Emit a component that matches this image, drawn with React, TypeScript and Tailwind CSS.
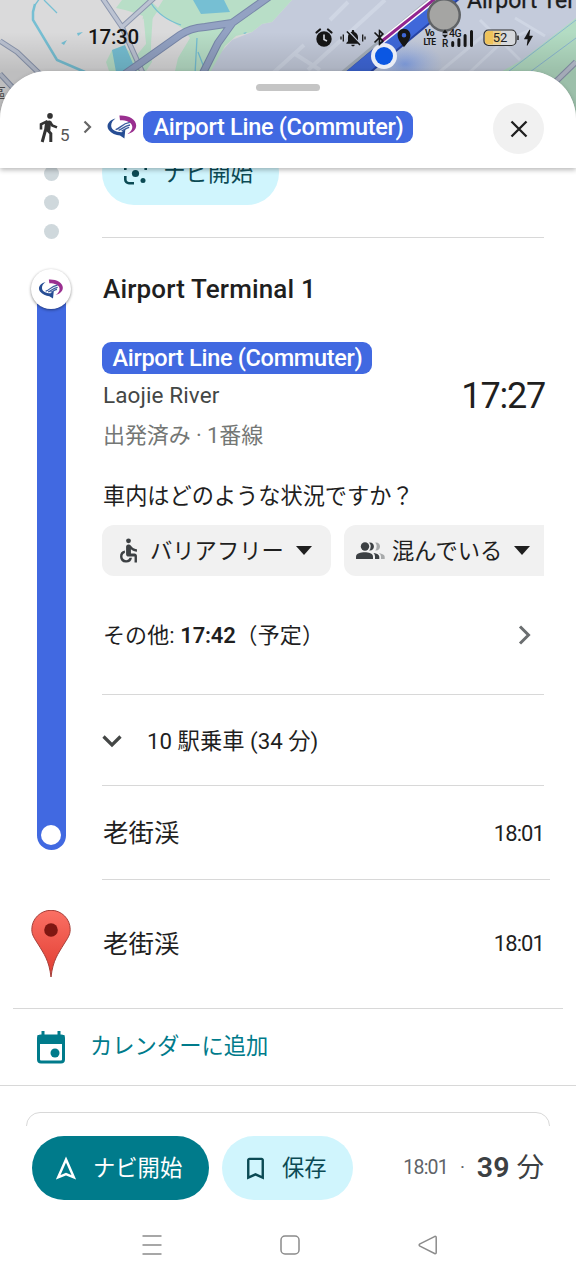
import type { ReactNode } from "react";
import clsx from "clsx";
import { MdAccessible, MdBluetooth, MdBolt, MdBookmarkBorder, MdLocationOn, MdNotificationsOff } from "react-icons/md";

function MapBackdrop() {
  return (
    <svg className="absolute left-0 top-0" width="576" height="128" viewBox="0 0 576 128">
      <defs>
        <linearGradient id="sheetShade" x1="0" y1="0" x2="0" y2="1">
          <stop offset="0.25" stopColor="#000" stopOpacity="0" />
          <stop offset="0.56" stopColor="#000" stopOpacity="0.13" />
          <stop offset="1" stopColor="#000" stopOpacity="0.13" />
        </linearGradient>
        <radialGradient id="heading">
          <stop offset="0" stopColor="#5f8df5" stopOpacity="0.6" />
          <stop offset="1" stopColor="#8fb0f5" stopOpacity="0" />
        </radialGradient>
      </defs>
      <rect width="576" height="128" fill="#dadadb" />
      <path d="M200 80 L214 60 L232 40 L252 32 L262 24 L272 22 L292 0 H576 V128 H200Z" fill="#c4cbdb" />
      <path d="M122 0 H292 L272 22 L262 24 L252 32 L236 36 L225 46 L206 80 H173 L178 58 L190 38 L182 28 L166 18 L157 12 L150 22 L152 62 L140 80 H112 L106 62 L112 50 L122 46 L140 36 L143 16 L135 13 L125 10 L116 8Z" fill="#b8dec7" />
      <path d="M158 12 L172 24 L186 32 L182 42 L152 60 L151 48Z M150 0 L163 0 L158 8Z M122 46 L140 36 L141 20 L145 18 L146 44 L136 56Z" fill="#dadadb" />
      <path d="M143 12 L153 12 L151 44 L147 52Z" fill="#b8dec7" />
      <path d="M193 0 H224 L230 12 L201 14Z M112 50 L125 45 L134 66 L124 72 H116Z" fill="#76bfd3" />
      <path d="M61 43 L67 40 L64 45Z M77 33 L83 32 L78 36Z M243 33 L247 32 L245 34Z" fill="#76bfd3" />
      <path d="M35 4 L33 12 L33 20 L57 60 L85 72" fill="none" stroke="#76bfd3" strokeWidth="2.5" />
      <path d="M40 -2 L35 5 M44 0 L57 13 M151 3 Q160 18 181 25 M197 38 L195 74 M198 52 L205 70" fill="none" stroke="#76bfd3" strokeWidth="1.3" />
      <g fill="none" strokeLinejoin="round">
        <path d="M0 41 L17 52 L42 76 M0 74 L14 89 M101 -4 L122 27 L145 78 M122 27 L154 -2" stroke="#8b96ae" strokeWidth="5.5" />
        <path d="M0 41 L17 52 L42 76 M0 74 L14 89 M101 -4 L122 27 L145 78 M122 27 L154 -2" stroke="#bcc3d2" strokeWidth="3.5" />
        <path d="M125 74 L180 35 Q190 28 205 27 L232 23 L270 -4 M233 22 L218 43 L201 77" stroke="#7887a9" strokeWidth="8" />
        <path d="M125 74 L180 35 Q190 28 205 27 L232 23 L270 -4 M233 22 L218 43 L201 77" stroke="#93a2c3" strokeWidth="6" />
      </g>
      <g fill="none" stroke="#cfd6e4" strokeWidth="4">
        <path d="M272 74 L304 45 M308 70 L350 32 L385 0 M295 54 L320 70 M348 2 L330 20" />
        <path d="M430 80 L490 30 M470 72 L500 44 L530 30 M480 20 L520 60 M515 18 L545 36" strokeWidth="3" />
      </g>
      <path d="M576 18 L522 60 L490 78 V128 H576Z" fill="#b3dcc3" />
      <path d="M500 78 L576 20 M530 72 L576 38" stroke="#8bb6d2" fill="none" />
      <path d="M545 92 L576 62" stroke="#8b96ae" strokeWidth="6" />
      <path d="M545 92 L576 62" stroke="#bcc3d2" strokeWidth="4" />
      <ellipse cx="405" cy="64" rx="38" ry="24" fill="url(#heading)" />
      <path d="M350 78 L454 -8" stroke="#2744a5" strokeWidth="19" />
      <path d="M350 78 L454 -8" stroke="#3f68da" strokeWidth="15" />
      <path d="M338 76 L434 -4" stroke="#a7b1bc" strokeWidth="3" />
      <path d="M382 41 L436 -2" stroke="#fff" strokeWidth="6" />
      <path d="M382 41 L436 -2" stroke="#92258f" strokeWidth="3" />
      <circle cx="444" cy="15" r="17" fill="#606366" />
      <circle cx="444" cy="15" r="14.5" fill="#a5a5a3" />
      <rect y="0" width="576" height="128" fill="url(#sheetShade)" />
      <circle cx="384" cy="56" r="13" fill="#e9ecf5" />
      <circle cx="384" cy="56" r="9" fill="#0b57e3" />
      <text x="467" y="7.5" fontSize="24" fontFamily="Roboto, sans-serif" fill="#1c1d20" stroke="#1c1d20" strokeWidth="0.3" textLength="108" lengthAdjust="spacingAndGlyphs">Airport Ter</text>
      <text x="-8" y="98" fontSize="14" fontFamily="Noto Sans CJK JP, sans-serif" fill="#4b4b4b">區</text>
    </svg>
  );
}

function StatusBar() {
  return (
    <div className="relative flex h-[71px] shrink-0 items-center pt-[4px] pl-[88px] text-[#161616]">
      <span className="w-[227px] text-[20.5px] font-medium tracking-[-0.2px]">17:30</span>
      <svg width="18" height="20" viewBox="0 0 18 20">
        <circle cx="9" cy="11" r="7.7" fill="currentColor" />
        <path d="M1.5 4.5 L5 1.5 M16.5 4.5 L13 1.5" stroke="currentColor" strokeWidth="2.2" strokeLinecap="round" />
        <path d="M9 6.5 V11.5 L12 13" stroke="#d5d8df" strokeWidth="1.6" fill="none" />
      </svg>
      <div className="ml-[7px] flex w-[26px] items-center justify-between">
        <svg width="4" height="10" viewBox="0 0 4 10"><path d="M1 3.5 V6.5 M3.3 1.5 V8.5" stroke="currentColor" strokeWidth="1.3" /></svg>
        <MdNotificationsOff className="-mx-1 size-[20px] shrink-0" />
        <svg width="4" height="10" viewBox="0 0 4 10"><path d="M3 3.5 V6.5 M.7 1.5 V8.5" stroke="currentColor" strokeWidth="1.3" /></svg>
      </div>
      <MdBluetooth className="ml-[4px] size-[19px]" />
      <MdLocationOn className="ml-[4px] size-[22px]" />
      <div className="ml-[8px] flex w-[13px] flex-col items-center text-[8.5px] leading-[9px] font-bold tracking-[-0.5px]">
        <span>Vo</span>
        <span>LTE</span>
      </div>
      <svg className="ml-[6px]" width="34" height="20" viewBox="0 0 34 20">
        <path d="M0 5.2 L3 1.5 L6 5.2Z M0 6.8 L3 10 L6 6.8Z" fill="currentColor" />
        <text x="7" y="9" fontSize="10.5" fontWeight="500" fill="currentColor" fontFamily="Roboto, sans-serif" letterSpacing="-0.4">4G</text>
        <text x="0" y="19" fontSize="10" fontWeight="500" fill="currentColor" fontFamily="Roboto, sans-serif">R</text>
        <path d="M10.7 17.5 V14.5 M16.9 17.5 V11.5 M23.1 17.5 V7.5 M29.5 17.5 V3.5" stroke="currentColor" strokeWidth="3" strokeLinecap="round" />
      </svg>
      <svg className="ml-[7px]" width="36" height="18" viewBox="0 0 36 18">
        <rect x="1" y="1" width="32" height="15.5" rx="4.5" fill="#d6d8dc" />
        <path d="M5.5 2 H10 V15.5 H5.5 A3.5 3.5 0 0 1 2 12 V5.5 A3.5 3.5 0 0 1 5.5 2Z" fill="#efc35b" />
        <path d="M10 2 H18 V15.5 H10Z" fill="#ecd08d" />
        <rect x="1" y="1" width="32" height="15.5" rx="4.5" fill="none" stroke="#2d2d2d" strokeWidth="1.2" />
        <path d="M35 6.5 V11" stroke="#2d2d2d" strokeWidth="1.6" />
        <text x="17" y="13.2" textAnchor="middle" fontSize="13" fill="#222" fontFamily="Roboto, sans-serif">52</text>
      </svg>
      <MdBolt className="-ml-px size-[21px]" />
    </div>
  );
}

function WalkIcon({ className }: { className?: string }) {
  return (
    <svg className={className} width="19" height="30" viewBox="0 0 19 30" fill="none" stroke="#333">
      <circle cx="11" cy="2.9" r="2.8" fill="#333" stroke="none" />
      <path d="M6.2 8 L11 7.4 L12 10 L11.2 18.2 L5 18.2Z" fill="#333" stroke="none" />
      <path d="M8.5 8.2 L2 11.3 V16.5" strokeWidth="2.6" />
      <path d="M10.8 8.5 L13.2 12.5 L18 14.4" strokeWidth="2.6" />
      <path d="M6.5 17 L3.2 29" strokeWidth="3" />
      <path d="M8 16.5 L11.8 20.5 V29" strokeWidth="3" />
    </svg>
  );
}

function MetroLogo({ className }: { className?: string }) {
  return (
    <svg className={className} viewBox="0 0 30 24">
      <path d="M8.5 3.6 C2 5.2 -1.5 10.5 1.8 15 C4.2 18.3 9 20.2 13 20.6 L17.4 23.4 L18.4 14 L14.6 17.2 C9 17 4.6 15 4.2 11 C4 8 5.8 5.4 8.5 3.6Z" fill="#264d94" />
      <path d="M12.4 .6 C21 0 29.2 4.2 29.2 10.6 C29.2 15 25.6 18 20.4 19.2 C23.6 17 25.8 14.4 25.2 11 C24.4 7.2 19.5 5.2 13 5.2Z" fill="#9a2f90" />
      <path d="M8.6 14.6 C13 13.8 15 8.4 22.8 7.4 M11.6 15.4 C15 14.4 17 11 23 10 M14.6 15.8 C17.4 15 18.6 13.2 22.2 12.4" fill="none" stroke="#3b5c9e" strokeWidth="1.4" />
    </svg>
  );
}

function LineBadge({ className }: { className?: string }) {
  return (
    <span className={clsx("flex h-8 items-center justify-center rounded-[9px] bg-[#4169e1] pt-px pl-px text-[23.5px] font-medium tracking-[-0.3px] whitespace-nowrap text-white", className)}>
      Airport Line (Commuter)
    </span>
  );
}

function SheetHeader() {
  return (
    <header className="relative z-10 h-[97px] shrink-0 rounded-t-[48px] bg-white shadow-[0_2px_5px_rgba(0,0,0,0.28)]">
      <div className="mx-auto h-[7px] w-16 translate-y-[13px] rounded-full bg-[#c5c5c5]" />
      <div className="flex items-center pt-[25px] pl-[39px]">
        <WalkIcon className="-mt-px mr-[2px]" />
        <span className="mt-[12px] w-[20px] text-[17px] leading-5 text-[#555]">5</span>
        <svg className="mt-[-4px] mr-[15px] ml-[3px]" width="9" height="14" viewBox="0 0 9 14">
          <path d="M1.5 1.5 L7 7 L1.5 12.5" fill="none" stroke="#666" strokeWidth="2.2" />
        </svg>
        <MetroLogo className="-mt-[3px] h-6 w-[30px]" />
        <LineBadge className="-mt-[3px] ml-[6px] w-[270px]" />
        <button className="ml-20 flex size-[51px] items-center justify-center rounded-full bg-[#f1f1f1]">
          <svg width="18" height="18" viewBox="0 0 18 18">
            <path d="M1.5 1.5 L16.5 16.5 M16.5 1.5 L1.5 16.5" stroke="#1f1f1f" strokeWidth="2.3" />
          </svg>
        </button>
      </div>
    </header>
  );
}

function LensIcon() {
  return (
    <svg width="23" height="23" viewBox="0 0 23 23" fill="none" stroke="#0b4a54" strokeWidth="2.6">
      <path d="M1.3 8 V5 A3.7 3.7 0 0 1 5 1.3 H8 M15 1.3 H18 A3.7 3.7 0 0 1 21.7 5 V8 M1.3 14 V17.5 A3.7 3.7 0 0 0 5 21.2 H10" />
      <circle cx="11.5" cy="11.5" r="3.6" fill="#0b4a54" stroke="none" />
      <circle cx="19" cy="18.5" r="2.5" fill="#0b4a54" stroke="none" />
    </svg>
  );
}

function WalkSection() {
  return (
    <div className="flex h-[70px] shrink-0">
      <div className="flex w-[102px] flex-col items-center gap-[14px]">
        <span className="-mt-[2px] size-[15px] shrink-0 rounded-full bg-[#cfd8dc]" />
        <span className="size-[15px] shrink-0 rounded-full bg-[#cfd8dc]" />
        <span className="size-[15px] shrink-0 rounded-full bg-[#cfd8dc]" />
      </div>
      <div className="w-[442px] border-b-[1.5px] border-[#d8d8d8]">
        <button className="-mt-[27px] flex h-16 w-[177px] items-center rounded-full bg-[#d0f5fd] pl-[22px] text-[22.5px] text-[#0b4a54]">
          <LensIcon />
          <span className="ml-[16px] pt-px">ナビ開始</span>
        </button>
      </div>
    </div>
  );
}

function Caret() {
  return (
    <svg width="16" height="9" viewBox="0 0 16 9">
      <path d="M0 0 H16 L8 9Z" fill="#1f1f1f" />
    </svg>
  );
}

function CrowdIcon() {
  return (
    <svg width="29" height="18" viewBox="0 0 29 18" fill="#3c4043">
      <circle cx="9" cy="4.5" r="4.2" />
      <path d="M0 17 V14.5 C0 11.5 5 10.3 8.7 10.3 C12.5 10.3 17 11.5 17 14.5 V17Z" />
      <path d="M13.2 .5 C19.5 -.2 19.5 9.2 13.2 8.5 Q16.2 4.5 13.2 .5Z M17.5 10.9 C21 11.5 23.3 12.6 23.3 14.8 V17 H19 V14.5 Q19 12.3 17.5 10.9Z" />
      <path d="M19.3 .5 C25.6 -.2 25.6 9.2 19.3 8.5 Q22 4.5 19.3 .5Z M22.8 10.9 C26.5 11.7 28.7 12.7 28.7 14.8 V17 H25 V14.5 Q25 12.3 22.8 10.9Z" opacity="0.4" />
    </svg>
  );
}

function Chip({ icon, label, className }: { icon: ReactNode; label: string; className?: string }) {
  return (
    <button className={clsx("flex h-[51px] shrink-0 items-center bg-[#f1f1f1] text-[22.3px] text-[#1f1f1f]", className)}>
      {icon}
      <span className="mr-3 pt-[2px] whitespace-nowrap">{label}</span>
      <Caret />
    </button>
  );
}

function TransitSection() {
  return (
    <div className="flex h-[642px] shrink-0">
      <div className="flex w-[102px] flex-col items-center pt-[31px]">
        <div className="z-[1] flex size-10 shrink-0 items-center justify-center rounded-full bg-white shadow-[0_1px_3px_rgba(0,0,0,0.45)]">
          <MetroLogo className="h-5 w-[26px]" />
        </div>
        <div className="-mt-5 flex h-[561px] w-[29px] items-end justify-center rounded-b-full bg-[#4169e1] pb-[5px]">
          <span className="size-[20px] rounded-full bg-white" />
        </div>
      </div>
      <div className="w-[448px] border-b-[1.5px] border-[#d8d8d8] pr-[6px]">
        <h2 className="h-[104px] pt-[32px] pl-px text-[26px] leading-[38px] font-medium tracking-[0.15px] text-[#1f1f1f]">Airport Terminal 1</h2>
        <div className="flex h-[133px] justify-between">
          <div>
            <LineBadge className="w-[270px]" />
            <p className="mt-[4px] pl-px text-[22.5px] leading-[34px] tracking-[0.1px] text-[#444746]">Laojie River</p>
            <p className="mt-[7px] pl-px text-[22px] leading-[34px] tracking-[-0.1px] text-[#747775]">出発済み · 1番線</p>
          </div>
          <span className="-mr-px pt-[34px] text-[36px] leading-10 tracking-[-1.2px] text-[#1f1f1f]">17:27</span>
        </div>
        <p className="h-[50px] pt-px pl-px text-[22.2px] leading-10 text-[#1f1f1f]">車内はどのような状況ですか？</p>
        <div className="flex gap-[13px] overflow-hidden">
          <Chip className="w-[229px] rounded-[12px] pl-[12px]" icon={<MdAccessible className="mr-[7px] size-[29px] text-[#3c4043]" />} label="バリアフリー" />
          <Chip className="w-[212px] rounded-[12px] pl-[12px]" icon={<span className="mr-[7px]"><CrowdIcon /></span>} label="混んでいる" />
        </div>
        <div className="flex h-[119px] items-center justify-between border-b-[1.5px] border-[#d8d8d8] pr-[13px] pl-px text-[22px] text-[#1f1f1f]">
          <p className="tracking-[0.1px]">その他: <b className="font-semibold tracking-[-0.2px]">17:42</b>（予定）</p>
          <svg width="13" height="20" viewBox="0 0 13 20">
            <path d="M2 1.5 L10.5 10 L2 18.5" fill="none" stroke="#6b6e70" strokeWidth="3" />
          </svg>
        </div>
        <div className="flex h-[91px] items-center border-b-[1.5px] border-[#d8d8d8] pt-[3px] text-[22.3px] text-[#1f1f1f]">
          <svg className="mr-[25px]" width="20" height="13" viewBox="0 0 20 13">
            <path d="M1.5 1.5 L10 10 L18.5 1.5" fill="none" stroke="#444746" strokeWidth="3.2" />
          </svg>
          10 駅乗車 (34 分)
        </div>
        <div className="flex h-[93px] items-center justify-between pt-[2px] pl-px text-[#1f1f1f]">
          <span className="text-[25.5px]">老街渓</span>
          <span className="text-[22px] tracking-[-0.9px]">18:01</span>
        </div>
      </div>
    </div>
  );
}

function DestinationSection() {
  return (
    <div className="flex h-[128px] shrink-0 items-center pr-8 text-[#1f1f1f]">
      <div className="flex w-[102px] justify-center">
        <svg width="40" height="68" viewBox="0 0 40 68">
          <defs>
            <linearGradient id="pin" x1="0" y1="0" x2="0" y2="1">
              <stop offset="0" stopColor="#fb7064" />
              <stop offset="1" stopColor="#e03c31" />
            </linearGradient>
          </defs>
          <path d="M20 67 C18 50 13 44 7 34 C3.5 28.5 .8 25 .8 19.5 A19.2 19.2 0 0 1 39.2 19.5 C39.2 25 36.5 28.5 33 34 C27 44 22 50 20 67Z" fill="url(#pin)" stroke="#a63f39" />
          <circle cx="20" cy="20" r="6.8" fill="#7f1712" />
        </svg>
      </div>
      <span className="flex-1 pl-px text-[25.5px]">老街渓</span>
      <span className="-mt-[2px] text-[22px] tracking-[-0.9px]">18:01</span>
    </div>
  );
}

function CalendarRow() {
  return (
    <div className="flex h-[77px] shrink-0 items-center border-b-[1.5px] border-[#d8d8d8] pl-[36px] text-[22.3px] text-[#007b8b]">
      <svg className="mr-[24px]" width="30" height="33" viewBox="0 0 30 33">
        <rect x="2.5" y="5" width="25" height="26" rx="2.5" fill="none" stroke="currentColor" strokeWidth="3" />
        <path d="M1.5 4 H28.5 V13 H1.5Z M5.5 0 H8.5 V5 H5.5Z M21.5 0 H24.5 V5 H21.5Z" fill="currentColor" />
        <circle cx="19" cy="22" r="4.5" fill="currentColor" />
      </svg>
      <span>カレンダーに追加</span>
    </div>
  );
}

function ActionBar() {
  return (
    <div className="flex h-16 shrink-0 items-center pr-8 pl-8">
      <button className="flex h-16 w-[177px] items-center rounded-full bg-[#007b8b] pl-[24px] text-[22.3px] text-white">
        <svg width="20" height="24" viewBox="0 0 20 24">
          <path d="M10 3.5 L17.8 21.3 L10 18 L2.2 21.3Z" fill="none" stroke="currentColor" strokeWidth="2.5" />
        </svg>
        <span className="ml-[17px] pt-px">ナビ開始</span>
      </button>
      <button className="ml-[13px] flex h-16 w-[131px] items-center rounded-full bg-[#d0f5fd] pl-[19px] text-[22.3px] text-[#0b4a54]">
        <MdBookmarkBorder className="size-[29px]" />
        <span className="ml-[12px] pt-px">保存</span>
      </button>
      <div className="ml-auto flex items-center">
        <span className="text-[19.5px] tracking-[-0.8px] text-[#5f6368]">18:01</span>
        <span className="mx-[12px] text-[19px] text-[#5f6368]">·</span>
        <span className="text-[28.5px] font-semibold text-[#3c4043]">39 <span className="text-[27.5px] font-normal">分</span></span>
      </div>
    </div>
  );
}

function SystemNav() {
  return (
    <nav className="flex shrink-0 items-center pt-[34px] pl-[142px] text-[#8b8b8b]">
      <svg width="20" height="22" viewBox="0 0 20 22">
        <path d="M0.5 2 H19.5 M0.5 11 H19.5 M0.5 20 H19.5" stroke="currentColor" strokeWidth="1.7" />
      </svg>
      <svg className="ml-[118px]" width="20" height="20" viewBox="0 0 20 20">
        <rect x="1" y="1" width="18" height="18" rx="4" fill="none" stroke="currentColor" strokeWidth="1.5" />
      </svg>
      <svg className="ml-[118px]" width="20" height="20" viewBox="0 0 20 20">
        <path d="M17 1.3 L2 8.8 Q.3 10 2 11.2 L17 18.7 Q18.2 18.8 18.2 17.5 V2.5 Q18.2 1.2 17 1.3Z" fill="none" stroke="currentColor" strokeWidth="1.5" />
      </svg>
    </nav>
  );
}

export default function App() {
  return (
    <div className="relative flex h-[1280px] w-[576px] flex-col overflow-hidden bg-white font-[Roboto,'Noto_Sans_CJK_JP',sans-serif]">
      <MapBackdrop />
      <StatusBar />
      <main className="relative flex flex-1 flex-col rounded-t-[48px] bg-white">
        <SheetHeader />
        <div className="flex h-[958px] shrink-0 flex-col overflow-hidden">
          <WalkSection />
          <TransitSection />
          <DestinationSection />
          <div className="mx-[13px] border-t-[1.5px] border-[#d8d8d8]" />
          <CalendarRow />
          <div className="mx-[26px] mt-[26px] h-10 shrink-0 rounded-t-[14px] border-[1.5px] border-[#d8d8d8]" />
        </div>
        <div className="h-[10px] shrink-0" />
        <ActionBar />
        <SystemNav />
      </main>
    </div>
  );
}
